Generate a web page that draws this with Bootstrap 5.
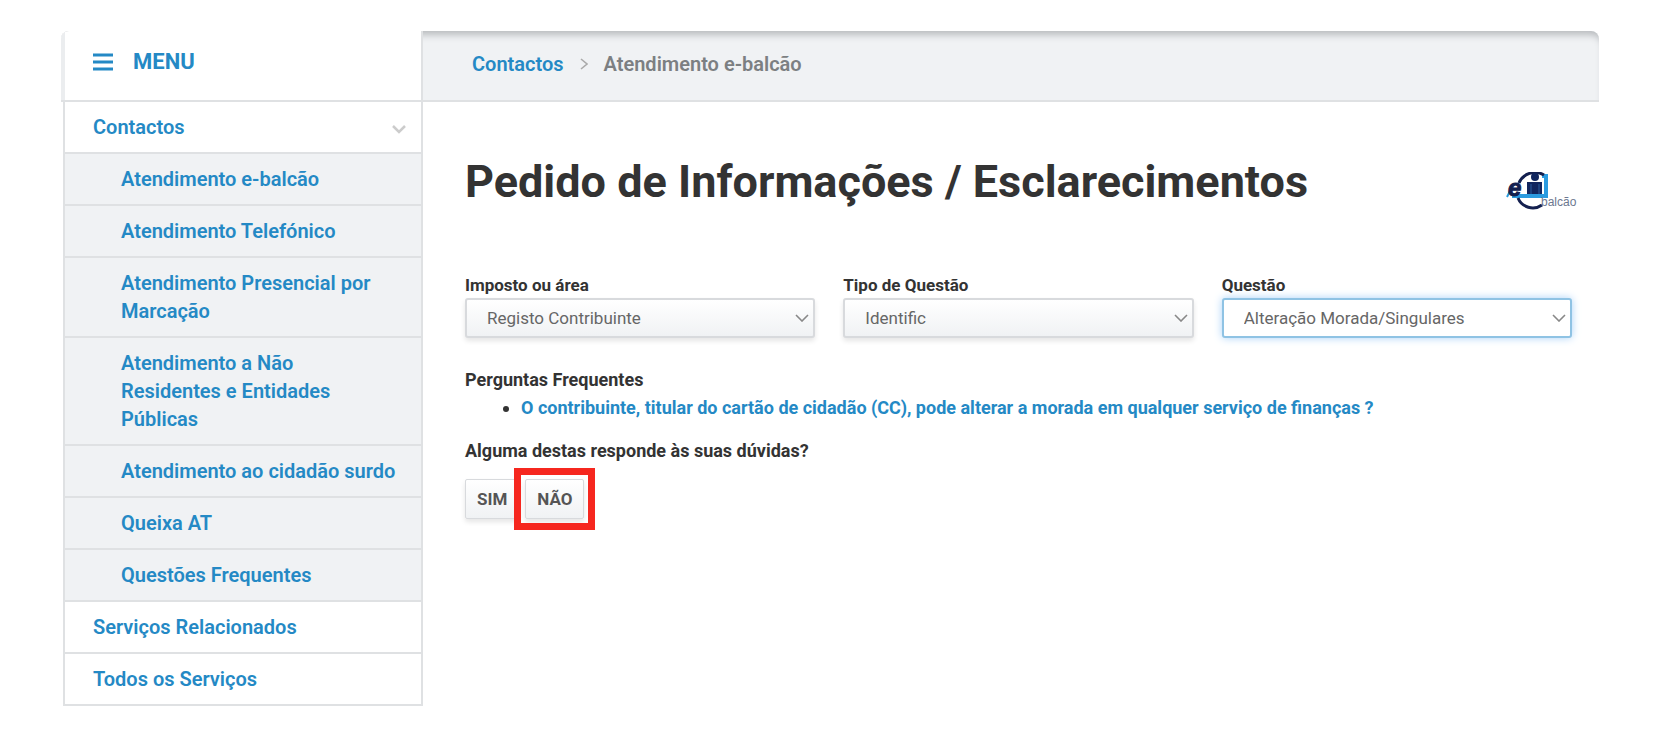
<!DOCTYPE html>
<html lang="pt">
<head>
<meta charset="utf-8">
<meta name="viewport" content="width=device-width, initial-scale=1">
<title>Pedido de Informações / Esclarecimentos</title>
<link href="https://cdn.jsdelivr.net/npm/bootstrap@5.3.0/dist/css/bootstrap.min.css" rel="stylesheet">
<style>
  :root { --brand: #2489c5; --line: #dfe1e3; --soft: #f0f2f4; }
  body { font-family: Roboto, "Liberation Sans", sans-serif; font-size: 18px; line-height: 28px; color: #333; background: #fff; }
  a { color: var(--brand); text-decoration: none; }
  a:hover { text-decoration: underline; }
  .page-shell { padding: 31px 81px 40px 61px; }
  .top-bar { background: var(--soft); border-bottom: 2px solid var(--line); border-radius: 8px 8px 0 0; box-shadow: inset 0 8px 7px -4px #b9bcbf; overflow: hidden; }
  .side-col { width: 360px; margin-left: 2px; flex: none; border: 2px solid var(--line); border-top: 0; }
  .menu-head { width: 362px; flex: none; height: 69px; background: #fff; border-left: 4px solid #ebedef; border-right: 2px solid var(--line); padding-left: 28px; }
  .menu-head button { color: var(--brand); font-size: 22px; font-weight: 700; gap: 20px; }
  .crumbs { padding-left: 49px; gap: 16px; }
  .crumbs, .side-menu { font-size: 20px; font-weight: 600; }
  .crumb-current { color: #7c7f82; }
  .side-menu a { display: flex; justify-content: space-between; align-items: center; padding: 11px 14px 11px 28px; border-bottom: 2px solid var(--line); }
  .side-menu li:last-child > a { border-bottom: 0; }
  .side-menu li li:last-child > a { border-bottom: 2px solid var(--line); }
  .sub-menu { background: var(--soft); }
  .side-menu .sub-menu a { padding-left: 56px; padding-right: 20px; }
  .content { padding: 52px 27px 0 42px; }
  h1 { font-size: 45px; line-height: 56px; font-weight: 700; }
  .brand-logo { margin: 18px -6px 0 0; }
  .fields { --bs-gutter-x: 28px; margin-top: 62px; }
  .fields label, .answers button { font-size: 17px; font-weight: 700; }
  .fields label { line-height: 26px; }
  .fields .form-select { height: 40px; padding: 1px 36px 0 20px; font-size: 17px; color: #666; border: 2px solid #d8dadd; border-radius: 3px;
    background-color: #fff; background-image: url("data:image/svg+xml,%3Csvg xmlns='http://www.w3.org/2000/svg' viewBox='0 0 14 8'%3E%3Cpath d='M1 1l6 6 6-6' fill='none' stroke='%23888' stroke-width='1.6'/%3E%3C/svg%3E"), linear-gradient(#fff, #f0f2f4);
    background-position: right 4px center, 0 0; background-size: 14px 8px, 100% 100%; box-shadow: 0 3px 5px #0000001a; }
  .fields .form-select.is-current { border-color: #8fc3e4; background-image: url("data:image/svg+xml,%3Csvg xmlns='http://www.w3.org/2000/svg' viewBox='0 0 14 8'%3E%3Cpath d='M1 1l6 6 6-6' fill='none' stroke='%23888' stroke-width='1.6'/%3E%3C/svg%3E"), linear-gradient(#fff, #fff); box-shadow: 0 0 9px #a9d2f8; }
  .faq { margin-top: 28px; font-weight: 700; }
  .faq ul { padding-left: 56px; margin-bottom: 15px; }
  .answers { gap: 6px; margin-top: 14px; }
  .answers button { height: 40px; padding: 0 11px; line-height: 20px; color: #555; border: 1px solid #d8dadd; border-radius: 2px; background: linear-gradient(#fff, #f0f2f4); box-shadow: 0 3px 5px #0000001a; }
  .marked::after { content: ""; position: absolute; inset: -11px; border: 7px solid #f6271f; pointer-events: none; }
</style>
</head>
<body>
<div class="page-shell">
  <header class="top-bar d-flex">
    <div class="menu-head d-flex align-items-center">
      <button type="button" class="btn p-0 border-0 d-flex align-items-center pb-2">
        <svg width="20" height="18" viewBox="0 0 20 18" aria-hidden="true"><path d="M0 2h20M0 9h20M0 16h20" stroke="currentColor" stroke-width="3"/></svg>
        MENU
      </button>
    </div>
    <nav class="crumbs d-flex align-items-center pb-1" aria-label="Localização">
      <a href="#">Contactos</a>
      <svg width="8" height="12" viewBox="0 0 8 12" aria-hidden="true"><path d="M1 1l6 5-6 5" fill="none" stroke="#aaa" stroke-width="1.6"/></svg>
      <span class="crumb-current">Atendimento e-balcão</span>
    </nav>
  </header>
  <div class="d-flex align-items-start">
    <nav class="side-col side-menu" aria-label="Menu">
      <ul class="list-unstyled mb-0">
        <li>
          <a href="#">Contactos
            <svg class="mt-1" width="16" height="10" viewBox="0 0 16 10" aria-hidden="true"><path d="M2 2l6 6 6-6" fill="none" stroke="#ccc" stroke-width="2.5"/></svg>
          </a>
          <ul class="list-unstyled sub-menu">
            <li><a href="#">Atendimento e-balcão</a></li>
            <li><a href="#">Atendimento Telefónico</a></li>
            <li><a href="#">Atendimento Presencial por Marcação</a></li>
            <li><a href="#">Atendimento a Não Residentes&nbsp;e Entidades Públicas</a></li>
            <li><a href="#">Atendimento ao cidadão surdo</a></li>
            <li><a href="#">Queixa AT</a></li>
            <li><a href="#">Questões Frequentes</a></li>
          </ul>
        </li>
        <li><a href="#">Serviços Relacionados</a></li>
        <li><a href="#">Todos os Serviços</a></li>
      </ul>
    </nav>
    <main class="content flex-grow-1">
      <div class="d-flex justify-content-between align-items-start">
        <h1 class="mb-0">Pedido de Informações / Esclarecimentos</h1>
        <svg class="brand-logo flex-shrink-0" width="72" height="38" viewBox="0 0 72 38" role="img" aria-label="e-balcão">
          <path d="M36 4H40V24H6" fill="none" stroke="#2a9be0" stroke-width="4"/>
          <path d="M38 3A17 16 0 0 0 13 11M12 26A16 16 0 0 0 36 33" fill="none" stroke="#14204f" stroke-width="3"/>
          <path d="M21 10h15v12H21z" fill="#10255e"/>
          <circle cx="29" cy="5" r="4" fill="#10255e"/>
          <path d="M25 12v10M33 12v10" stroke="#2a5c9c" stroke-width="1"/>
          <path d="M1 25L4 19" stroke="#2a9be0" stroke-width="2"/>
          <text x="2" y="24" font-family="Liberation Sans, sans-serif" font-size="24" font-weight="700" font-style="italic" fill="#14204f" stroke="#14204f">e</text>
          <text x="35" y="34" font-family="Liberation Sans, sans-serif" font-size="12" fill="#6c7890">balcão</text>
        </svg>
      </div>
      <form>
        <div class="row fields">
          <div class="col-4">
            <label class="d-block" for="area">Imposto ou área</label>
            <select class="form-select" id="area"><option>Registo Contribuinte</option></select>
          </div>
          <div class="col-4">
            <label class="d-block" for="tipo">Tipo de Questão</label>
            <select class="form-select" id="tipo"><option>Identific</option></select>
          </div>
          <div class="col-4">
            <label class="d-block" for="questao">Questão</label>
            <select class="form-select is-current" id="questao"><option>Alteração Morada/Singulares</option></select>
          </div>
        </div>
        <section class="faq">
          <div>Perguntas Frequentes</div>
          <ul><li><a href="#">O contribuinte, titular do cartão de cidadão (CC), pode alterar a morada em qualquer serviço de finanças ?</a></li></ul>
          <div>Alguma destas responde às suas dúvidas?</div>
          <div class="answers d-flex">
            <button type="button">SIM</button>
            <div class="marked position-relative"><button type="button">NÃO</button></div>
          </div>
        </section>
      </form>
    </main>
  </div>
</div>
<script src="https://cdn.jsdelivr.net/npm/bootstrap@5.3.0/dist/js/bootstrap.bundle.min.js"></script>
</body>
</html>
